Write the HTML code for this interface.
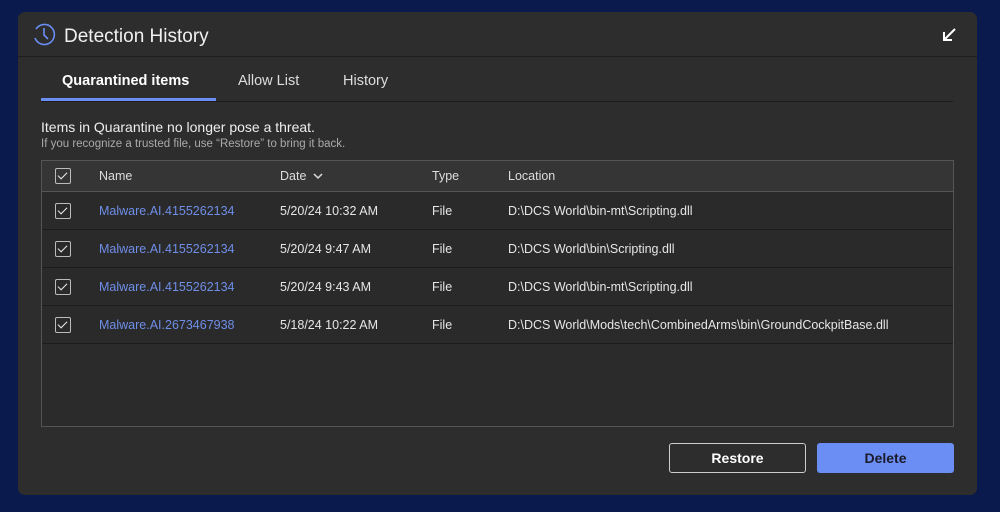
<!DOCTYPE html>
<html><head><style>
*{margin:0;padding:0;box-sizing:border-box}
body{width:1000px;height:512px;background:#0a1a4c;font-family:"Liberation Sans",sans-serif;position:relative;overflow:hidden;color:#e6e6e6}
.panel{position:absolute;left:18px;top:12px;width:959px;height:483px;background:#2d2d2d;border-radius:7px}
.title{position:absolute;left:46px;top:13px;font-size:19px;color:#f0f0f0}
.hline{position:absolute;left:0;right:0;top:44px;height:1px;background:#1e1e1e}
.tab{position:absolute;top:61px;font-size:14.5px;color:#ddd}
.tabline{position:absolute;left:23px;top:89px;width:912px;height:1px;background:#1c1c1c}
.ul{position:absolute;left:23px;top:86px;width:175px;height:3px;background:#6b8ef5}
.t1{position:absolute;left:23px;top:107px;font-size:14px;color:#eee}
.t2{position:absolute;left:23px;top:126px;font-size:11.5px;color:#aaa}
.table{position:absolute;left:23px;top:148px;width:913px;height:267px;border:1px solid #555;background:#2b2b2b}
.row{position:absolute;left:0;width:911px;height:38px;border-bottom:1px solid #1c1c1c;font-size:12.5px;background:#2a2a2a}
.row.h{height:31px;background:#353535;border-bottom:1px solid #555}
.row span{position:absolute;top:12px}
.row.h span{top:8px;color:#ddd}
.cb{position:absolute;left:13px;top:11px;width:16px;height:16px;border:1.5px solid #bbb;border-radius:2px}
.row.h .cb{top:7px}
.cb:after{content:"";position:absolute;left:4px;top:1px;width:4px;height:8px;border:solid #eee;border-width:0 1.5px 1.5px 0;transform:rotate(45deg)}
.lnk{color:#6f8ee8}
.btn{position:absolute;top:431px;width:137px;height:30px;border-radius:3px;font-size:14px;font-weight:bold;text-align:center}
</style></head><body>
<div class="panel">
<svg style="position:absolute;left:14px;top:11px" width="24" height="24" viewBox="0 0 24 24"><path d="M4 6 A10 10 0 1 1 3 15" fill="none" stroke="#6b8ef5" stroke-width="1.6"/><path d="M12 5 V12 L16 16" fill="none" stroke="#6b8ef5" stroke-width="1.6"/></svg>
<div class="title" style="top:14px">Detection History</div>
<svg style="position:absolute;left:923px;top:15px" width="16" height="16" viewBox="0 0 16 16"><path d="M14 2 L3 13 M3 5 V13 H11" fill="none" stroke="#fff" stroke-width="2"/></svg>
<div class="hline"></div>
<div class="tab" style="left:44px;font-weight:bold;color:#fff">Quarantined items</div>
<div class="tab" style="left:220px">Allow List</div>
<div class="tab" style="left:325px">History</div>
<div class="tabline"></div><div class="ul"></div>
<div class="t1">Items in Quarantine no longer pose a threat.</div>
<div class="t2">If you recognize a trusted file, use “Restore” to bring it back.</div>
<div class="table">
<div class="row h" style="top:0"><div class="cb"></div><span style="left:57px">Name</span><span style="left:238px">Date</span><svg style="position:absolute;left:271px;top:12px" width="10" height="7" viewBox="0 0 10 7"><path d="M1 1 L5 5 L9 1" fill="none" stroke="#ddd" stroke-width="1.5"/></svg><span style="left:390px">Type</span><span style="left:466px">Location</span></div>
<div class="row" style="top:31px"><div class="cb"></div><span class="lnk" style="left:57px">Malware.AI.4155262134</span><span style="left:238px">5/20/24 10:32 AM</span><span style="left:390px">File</span><span style="left:466px">D:\DCS World\bin-mt\Scripting.dll</span></div>
<div class="row" style="top:69px"><div class="cb"></div><span class="lnk" style="left:57px">Malware.AI.4155262134</span><span style="left:238px">5/20/24 9:47 AM</span><span style="left:390px">File</span><span style="left:466px">D:\DCS World\bin\Scripting.dll</span></div>
<div class="row" style="top:107px"><div class="cb"></div><span class="lnk" style="left:57px">Malware.AI.4155262134</span><span style="left:238px">5/20/24 9:43 AM</span><span style="left:390px">File</span><span style="left:466px">D:\DCS World\bin-mt\Scripting.dll</span></div>
<div class="row" style="top:145px"><div class="cb"></div><span class="lnk" style="left:57px">Malware.AI.2673467938</span><span style="left:238px">5/18/24 10:22 AM</span><span style="left:390px">File</span><span style="left:466px">D:\DCS World\Mods\tech\CombinedArms\bin\GroundCockpitBase.dll</span></div>
</div>
<div class="btn" style="left:651px;border:1.5px solid #ccc;color:#fff;line-height:29px">Restore</div>
<div class="btn" style="left:799px;background:#6b8ef5;color:#1a1a2a;line-height:30px">Delete</div>
</div>
</body></html>
